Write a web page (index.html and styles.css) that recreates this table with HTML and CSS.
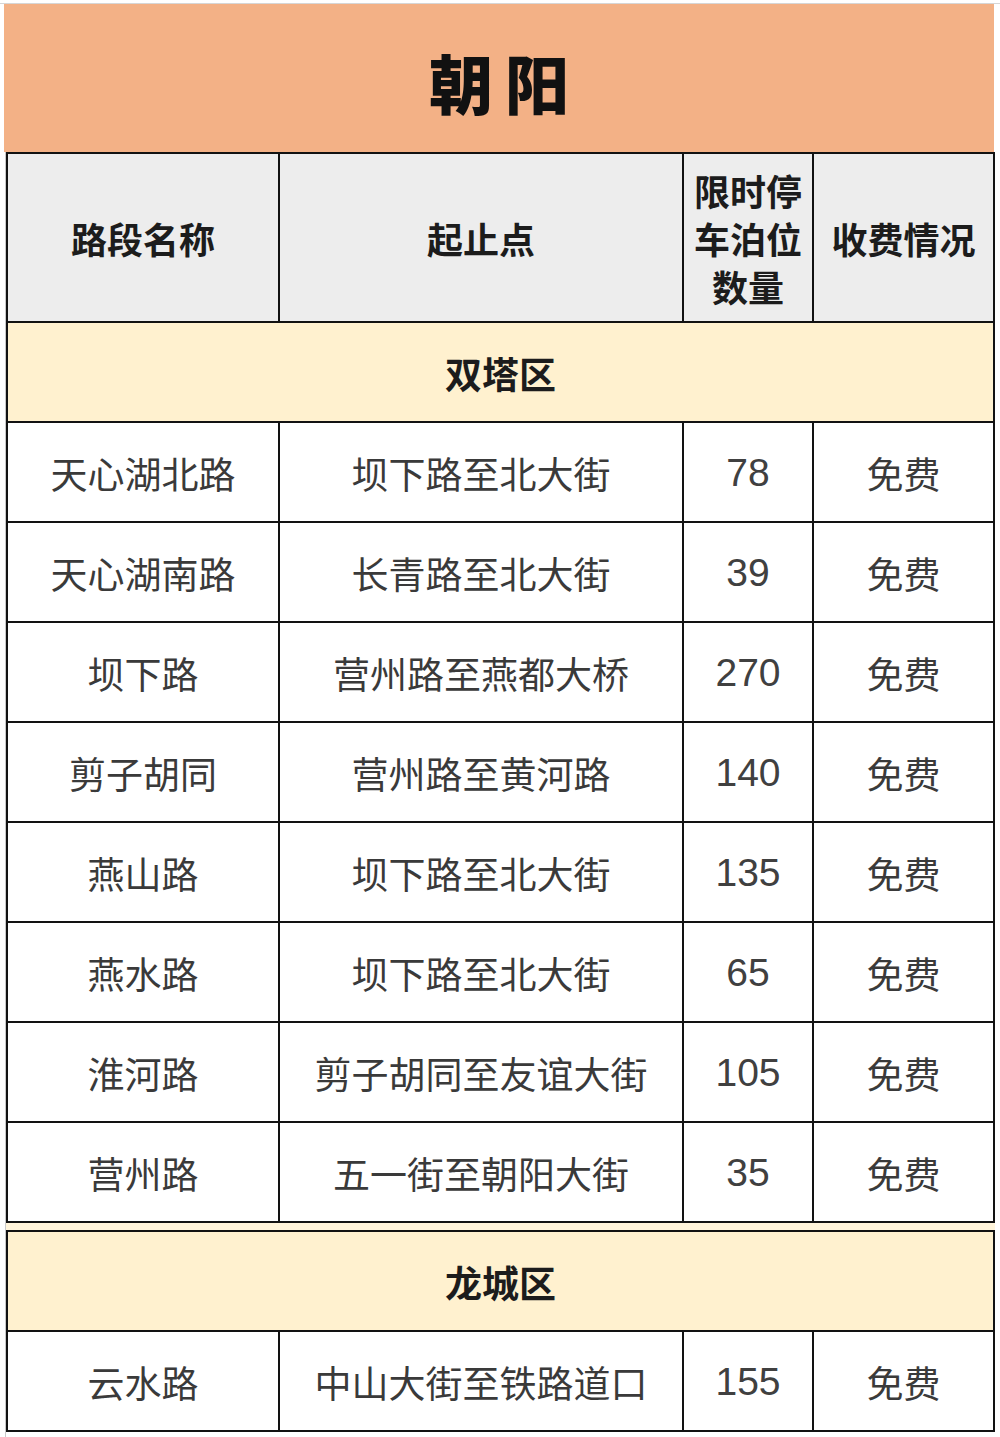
FILE: index.html
```html
<!DOCTYPE html>
<html lang="zh-CN">
<head>
<meta charset="utf-8">
<title>朝阳 限时停车泊位</title>
<link rel="stylesheet" href="styles.css">
</head>
<body>
<div class="page">
  <div class="title">朝阳</div>
  <div class="sheet">
    <div class="grid grid-main">
      <div class="cell head">路段名称</div>
      <div class="cell head">起止点</div>
      <div class="cell head narrow">限时停车泊位数量</div>
      <div class="cell head">收费情况</div>

      <div class="cell section">双塔区</div>

      <div class="cell">天心湖北路</div><div class="cell">坝下路至北大街</div><div class="cell num">78</div><div class="cell">免费</div>
      <div class="cell">天心湖南路</div><div class="cell">长青路至北大街</div><div class="cell num">39</div><div class="cell">免费</div>
      <div class="cell">坝下路</div><div class="cell">营州路至燕都大桥</div><div class="cell num">270</div><div class="cell">免费</div>
      <div class="cell">剪子胡同</div><div class="cell">营州路至黄河路</div><div class="cell num">140</div><div class="cell">免费</div>
      <div class="cell">燕山路</div><div class="cell">坝下路至北大街</div><div class="cell num">135</div><div class="cell">免费</div>
      <div class="cell">燕水路</div><div class="cell">坝下路至北大街</div><div class="cell num">65</div><div class="cell">免费</div>
      <div class="cell">淮河路</div><div class="cell">剪子胡同至友谊大街</div><div class="cell num">105</div><div class="cell">免费</div>
      <div class="cell">营州路</div><div class="cell">五一街至朝阳大街</div><div class="cell num">35</div><div class="cell">免费</div>
    </div>
    <div class="strip"></div>
    <div class="grid">
      <div class="cell section">龙城区</div>
      <div class="cell">云水路</div><div class="cell">中山大街至铁路道口</div><div class="cell num">155</div><div class="cell">免费</div>
    </div>
  </div>
</div>
</body>
</html>
```

FILE: styles.css
```css
html, body {
  margin: 0;
  padding: 0;
  background: #ffffff;
}

body {
  font-family: "Noto Sans CJK SC", "Noto Sans", sans-serif;
  color: #333333;
}

.page {
  margin-top: 3px;
  border-top: 1px solid #d6d6d6;
  height: 1433px;
  overflow: hidden;
}

.title {
  margin-left: 4px;
  width: 990px;
  height: 148px;
  background: #f3b186;
  display: flex;
  align-items: center;
  justify-content: center;
  font-family: "Noto Sans CJK SC", sans-serif;
  font-weight: 900;
  font-size: 64px;
  letter-spacing: 12px;
  padding-left: 12px;
  padding-top: 6px;
  box-sizing: border-box;
  color: #111111;
}

.sheet {
  margin-left: 5px;
  border-left: 1px solid #c9c9c9;
  min-height: 1290px;
}

.grid {
  display: grid;
  grid-template-columns: 270px 402px 128px 179px;
  grid-auto-rows: 98px;
  gap: 2px;
  padding: 2px;
  background: #121212;
  width: max-content;
}

.grid-main {
  grid-template-rows: 167px;
}

.cell {
  background: #ffffff;
  display: flex;
  align-items: center;
  justify-content: center;
  text-align: center;
  font-size: 37px;
  font-weight: 400;
  color: #3a3a3a;
  line-height: 1.2;
  padding-top: 3px;
  box-sizing: border-box;
}

.num {
  font-family: "Liberation Sans", "Noto Sans", sans-serif;
  font-size: 39px;
  color: #404040;
}

.head {
  background: #ededed;
  font-weight: 700;
  font-size: 36px;
  color: #1c1c1c;
  line-height: 48px;
  padding-top: 0;
}

.narrow {
  padding: 0 6px;
}

.section {
  grid-column: 1 / -1;
  background: #fff1cf;
  font-weight: 700;
  font-size: 37px;
  color: #1c1c1c;
}

.strip {
  width: 989px;
  height: 7px;
  background: #fff4da;
}
```
